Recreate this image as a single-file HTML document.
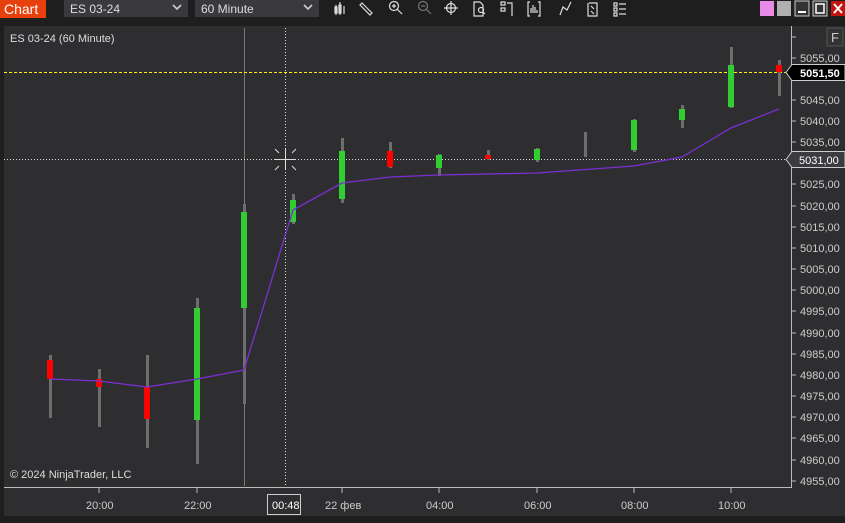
<!DOCTYPE html>
<html><head><meta charset="utf-8"><style>
body{margin:0;width:845px;height:518px;background:#1e1e1e;overflow:hidden;font-family:"Liberation Sans",sans-serif;}
</style></head><body>
<svg width="845" height="518" xmlns="http://www.w3.org/2000/svg" font-family="Liberation Sans, sans-serif">
<rect width="845" height="518" fill="#1e1e1e"/>
<!-- toolbar -->
<rect x="0" y="0" width="46" height="18" fill="#e8400c"/>
<text x="4" y="14" fill="#fff" font-size="14">Chart</text>
<rect x="64" y="0" width="124" height="17" fill="#3a3a3e"/>
<text x="70" y="13" fill="#ddd" font-size="12">ES 03-24</text>
<path d="M173 5l4 4 4-4" stroke="#ccc" stroke-width="1.6" fill="none"/>
<rect x="195" y="0" width="124" height="17" fill="#3a3a3e"/>
<text x="201" y="13" fill="#ddd" font-size="12">60 Minute</text>
<path d="M304 5l4 4 4-4" stroke="#ccc" stroke-width="1.6" fill="none"/>
<g stroke="#ddd" fill="none" stroke-width="1.2">
<path d="M336 5v10M340 2v13M344 6v8"/><rect x="335" y="7" width="2" height="6" fill="#ddd"/><rect x="339" y="5" width="2" height="8" fill="#ddd"/>
<path d="M362 3l10 10-2 2-10-10z"/>
<circle cx="394" cy="6" r="4.5"/><path d="M397 9l5 5M392 6h4M394 4v4"/>
<g stroke="#777"><circle cx="423" cy="6" r="4.5"/><path d="M426 9l5 5M421 6h4"/></g>
<circle cx="451" cy="8" r="4.5"/><path d="M451 1v14M444 8h14"/>
<path d="M474 2h6l3 3v11h-9z"/><circle cx="481" cy="10" r="2.5"/><path d="M483 12l2 2"/>
<path d="M501 2h4v3h-4zM501 8h4v3h-4zM507 3h5v13"/>
<path d="M530 2h-2v14h2M538 2h2v14h-2M531 13v-5M533 13v-8M535 13v-6M537 13v-3"/>
<path d="M560 15l3-8 4 3 4-8"/>
<path d="M589 3h8v13h-9v-13M591 6l3 3M591 11l3 3"/>
<path d="M614 3h3v3h-3zM614 8h3v3h-3zM614 13h3v3h-3zM619 4h7M619 9h7M619 14h7"/>
</g>
<rect x="760" y="1" width="14" height="15" fill="#e98be6"/>
<rect x="777" y="1" width="14" height="15" fill="#b0b0b0"/>
<rect x="795" y="1" width="14" height="15" fill="#333" stroke="#ccc"/><path d="M798 12h8" stroke="#fff" stroke-width="2"/>
<rect x="813" y="1" width="14" height="15" fill="#333" stroke="#ccc"/><rect x="816" y="4" width="8" height="9" fill="none" stroke="#fff" stroke-width="1.5"/>
<rect x="831" y="1" width="14" height="15" fill="#c0140c"/><path d="M834 4l8 9M842 4l-8 9" stroke="#fff" stroke-width="2"/>
<!-- chart -->
<rect x="4" y="26" width="787" height="461" fill="#2e2e31"/>
<rect x="791" y="26" width="54" height="490" fill="#2e2e31"/>
<rect x="4" y="487" width="787" height="29" fill="#2e2e31"/>
<line x1="4" y1="487.5" x2="792" y2="487.5" stroke="#bbb"/>
<line x1="791.5" y1="26" x2="791.5" y2="488" stroke="#bbb"/>
<text x="10" y="42" fill="#ddd" font-size="11">ES 03-24 (60 Minute)</text>
<text x="10" y="478" fill="#ddd" font-size="11">© 2024 NinjaTrader, LLC</text>
<rect x="827" y="28" width="16" height="18" fill="#333" stroke="#555"/><text x="831" y="42" fill="#ccc" font-size="13">F</text>
<!-- axis ticks & labels -->
<g fill="#ccc" font-size="11" stroke="#bbb">
<path d="M792 37h4M792 58h4M792 79h4M792 100h4M792 121h4M792 142h4M792 163h4M792 184h4M792 206h4M792 227h4M792 248h4M792 269h4M792 290h4M792 311h4M792 333h4M792 354h4M792 375h4M792 396h4M792 417h4M792 438h4M792 460h4M792 481h4"/>
<g stroke="none">
<text x="800" y="62">5055,00</text><text x="800" y="104">5045,00</text><text x="800" y="125">5040,00</text><text x="800" y="146">5035,00</text>
<text x="800" y="188">5025,00</text><text x="800" y="210">5020,00</text><text x="800" y="231">5015,00</text><text x="800" y="252">5010,00</text>
<text x="800" y="273">5005,00</text><text x="800" y="294">5000,00</text><text x="800" y="315">4995,00</text><text x="800" y="337">4990,00</text>
<text x="800" y="358">4985,00</text><text x="800" y="379">4980,00</text><text x="800" y="400">4975,00</text><text x="800" y="421">4970,00</text>
<text x="800" y="442">4965,00</text><text x="800" y="464">4960,00</text><text x="800" y="485">4955,00</text>
</g></g>
<!-- time axis -->
<g stroke="#bbb"><path d="M99 488v5M197 488v5M342 488v5M439 488v5M537 488v5M634 488v5M731 488v5"/></g>
<g fill="#ccc" font-size="11">
<text x="86" y="509">20:00</text><text x="184" y="509">22:00</text><text x="325" y="509">22 фев</text><text x="426" y="509">04:00</text>
<text x="524" y="509">06:00</text><text x="621" y="509">08:00</text><text x="718" y="509">10:00</text></g>
<rect x="267.5" y="494.5" width="33" height="20" fill="#2e2e31" stroke="#ccc"/>
<text x="272" y="509" fill="#fff" font-size="11">00:48</text>
<!-- lines -->
<line x1="244.5" y1="28" x2="244.5" y2="486" stroke="#777"/>
<line x1="285.5" y1="28" x2="285.5" y2="486" stroke="#ddd" stroke-dasharray="1,2"/>
<line x1="4" y1="159.5" x2="790" y2="159.5" stroke="#ddd" stroke-dasharray="1,2"/>
<line x1="4" y1="72.5" x2="790" y2="72.5" stroke="#ffef00" stroke-dasharray="3,2"/>
<!-- candles -->
<g fill="#6e6e6e">
<rect x="49" y="355" width="3" height="63"/><rect x="98" y="369" width="3" height="58"/><rect x="146" y="355" width="3" height="93"/>
<rect x="196" y="298" width="3" height="166"/><rect x="243" y="204" width="3" height="200"/><rect x="292" y="194" width="3" height="30"/>
<rect x="341" y="138" width="3" height="65"/><rect x="389" y="142" width="3" height="26"/><rect x="438" y="154" width="3" height="22"/>
<rect x="487" y="150" width="3" height="10"/><rect x="536" y="148" width="3" height="14"/><rect x="584" y="132" width="3" height="25"/>
<rect x="633" y="119" width="3" height="33"/><rect x="681" y="105" width="3" height="23"/><rect x="730" y="47" width="3" height="61"/>
<rect x="778" y="60" width="3" height="36"/></g>
<g fill="#ff0000">
<rect x="47" y="360" width="6" height="19"/><rect x="96" y="379" width="6" height="8"/><rect x="144" y="387" width="6" height="32"/>
<rect x="387" y="151" width="6" height="16"/><rect x="485" y="155" width="6" height="4"/><rect x="776" y="65" width="6" height="7"/></g>
<g fill="#32cd32">
<rect x="194" y="308" width="6" height="112"/><rect x="241" y="212" width="6" height="96"/><rect x="290" y="200" width="6" height="22"/>
<rect x="339" y="151" width="6" height="48"/><rect x="436" y="155" width="6" height="13"/><rect x="534" y="149" width="6" height="11"/>
<rect x="631" y="120" width="6" height="30"/><rect x="679" y="109" width="6" height="11"/><rect x="728" y="65" width="6" height="42"/></g>
<polyline points="50,379 99,381 147,387 197,379 244,370 293,210 342,183 390,177 439,175 537,173 634,166 682,157 731,128 779,109" fill="none" stroke="#7b2fd0" stroke-width="1.3"/>
<!-- crosshair -->
<g stroke="#ddd"><path d="M274 159.5h22M285.5 148v22M275 149l4 4M296 149l-4 4M275 170l4-4M296 170l-4-4"/></g>
<!-- price labels -->
<path d="M786 72.5l6-8h53v16h-53z" fill="#000" stroke="#ccc"/>
<text x="800" y="77" fill="#fff" font-size="11" font-weight="bold">5051,50</text>
<path d="M786 159.5l6-8h53v16h-53z" fill="#3c3c40" stroke="#ccc"/>
<text x="799" y="164" fill="#fff" font-size="11">5031,00</text>
</svg>
</body></html>
